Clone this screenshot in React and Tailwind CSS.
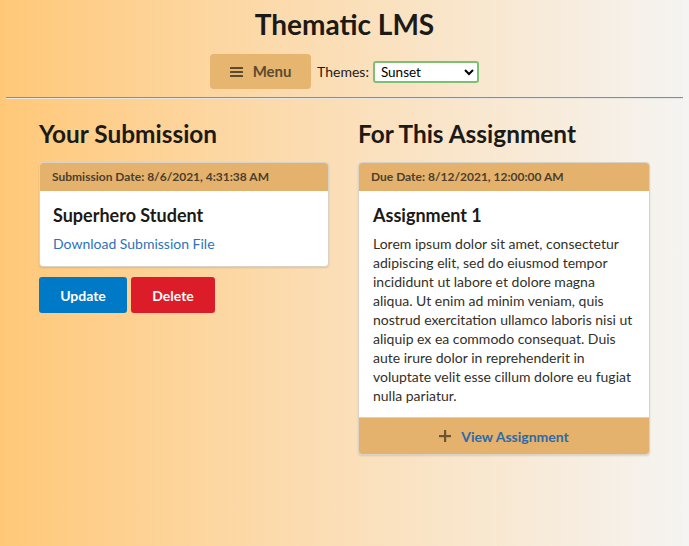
import React from "react";

const lorem =
  "Lorem ipsum dolor sit amet, consectetur adipiscing elit, sed do eiusmod tempor incididunt ut labore et dolore magna aliqua. Ut enim ad minim veniam, quis nostrud exercitation ullamco laboris nisi ut aliquip ex ea commodo consequat. Duis aute irure dolor in reprehenderit in voluptate velit esse cillum dolore eu fugiat nulla pariatur.";

export default function App() {
  return (
    <div
      className="min-h-[546px] w-full bg-gradient-to-r from-[#ffc878] to-[#f5f4f2] text-[#1e1a14]"
      style={{ fontFamily: "Lato, 'Noto Sans', sans-serif" }}
    >
      <header className="flex flex-col items-center pt-[6px]">
        <h1 className="text-[28px] font-bold leading-[36px] text-[#1c1a16]">Thematic LMS</h1>
        <div className="mt-[12px] flex items-center gap-[6px]">
          <button className="flex h-[35px] w-[101px] items-center justify-center gap-[10px] rounded-[4px] bg-[#e6b56f] text-[15px] font-bold text-[#5b4a30]">
            <svg width="13" height="12" viewBox="0 0 13 12" fill="#5b4a30">
              <rect x="0" y="1" width="13" height="2" rx="0.5" />
              <rect x="0" y="5" width="13" height="2" rx="0.5" />
              <rect x="0" y="9" width="13" height="2" rx="0.5" />
            </svg>
            Menu
          </button>
          <label className="flex items-center gap-[4px] text-[14px] text-[#1e1a14]">
            Themes:
            <select
              defaultValue="Sunset"
              className="h-[22px] w-[106px] rounded-[3px] border-2 border-[#7dbf74] bg-white pl-[2px] text-[13.5px] text-black"
              style={{ fontFamily: "Lato, sans-serif" }}
            >
              <option>Sunset</option>
              <option>Ocean</option>
              <option>Forest</option>
            </select>
          </label>
        </div>
      </header>
      <div className="mx-[6px] mt-[8px] h-[2px] border-t border-[#8c8c8c] bg-[#e6e6e6]" />
      <main className="mx-auto mt-[19px] grid w-[611px] grid-cols-[290px_292px] gap-[29px]">
        <section>
          <h2 className="text-[24.4px] font-bold leading-[32px] text-[#1c1a16]">Your Submission</h2>
          <div className="mt-[12px] overflow-hidden rounded-[4px] border border-[#d9d2c6] bg-white shadow-[0_1px_2px_rgba(0,0,0,0.12)]">
            <div className="flex h-[28px] items-center bg-[#e4b26c] px-[12px] text-[12px] font-bold text-[#4d3f2c]">
              Submission Date: 8/6/2021, 4:31:38 AM
            </div>
            <div className="px-[13px] pb-[13px] pt-[12px]">
              <div className="text-[18px] font-bold leading-[24px] text-[#1c1a16]">Superhero Student</div>
              <a className="mt-[8px] block text-[14px] leading-[18px] text-[#2d72b8]" href="#">
                Download Submission File
              </a>
            </div>
          </div>
          <div className="mt-[10px] flex gap-[4px]">
            <button className="h-[36px] w-[88px] rounded-[3px] bg-[#0079c7] text-[14px] font-bold text-white">Update</button>
            <button className="h-[36px] w-[84px] rounded-[3px] bg-[#dc1c28] text-[14px] font-bold text-white">Delete</button>
          </div>
        </section>
        <section>
          <h2 className="text-[24.4px] font-bold leading-[32px] text-[#1c1a16]">For This Assignment</h2>
          <div className="mt-[12px] overflow-hidden rounded-[4px] border border-[#d9d2c6] bg-white shadow-[0_1px_2px_rgba(0,0,0,0.12)]">
            <div className="flex h-[28px] items-center bg-[#e4b26c] px-[12px] text-[12px] font-bold text-[#4d3f2c]">
              Due Date: 8/12/2021, 12:00:00 AM
            </div>
            <div className="px-[14px] pb-[12px] pt-[12px]">
              <div className="text-[18px] font-bold leading-[24px] text-[#1c1a16]">Assignment 1</div>
              <p className="mt-[7px] text-[14px] leading-[19px] text-[#333029]">{lorem}</p>
            </div>
            <div className="flex h-[37px] items-center justify-center gap-[10px] border-t border-[#d9d2c6] bg-[#e4b26c] text-[14px] font-bold text-[#2d6aa8]">
              <svg width="12" height="12" viewBox="0 0 12 12" fill="#6b5534">
                <rect x="5" y="0" width="2.2" height="12" />
                <rect x="0" y="5" width="12" height="2.2" />
              </svg>
              View Assignment
            </div>
          </div>
        </section>
      </main>
    </div>
  );
}
